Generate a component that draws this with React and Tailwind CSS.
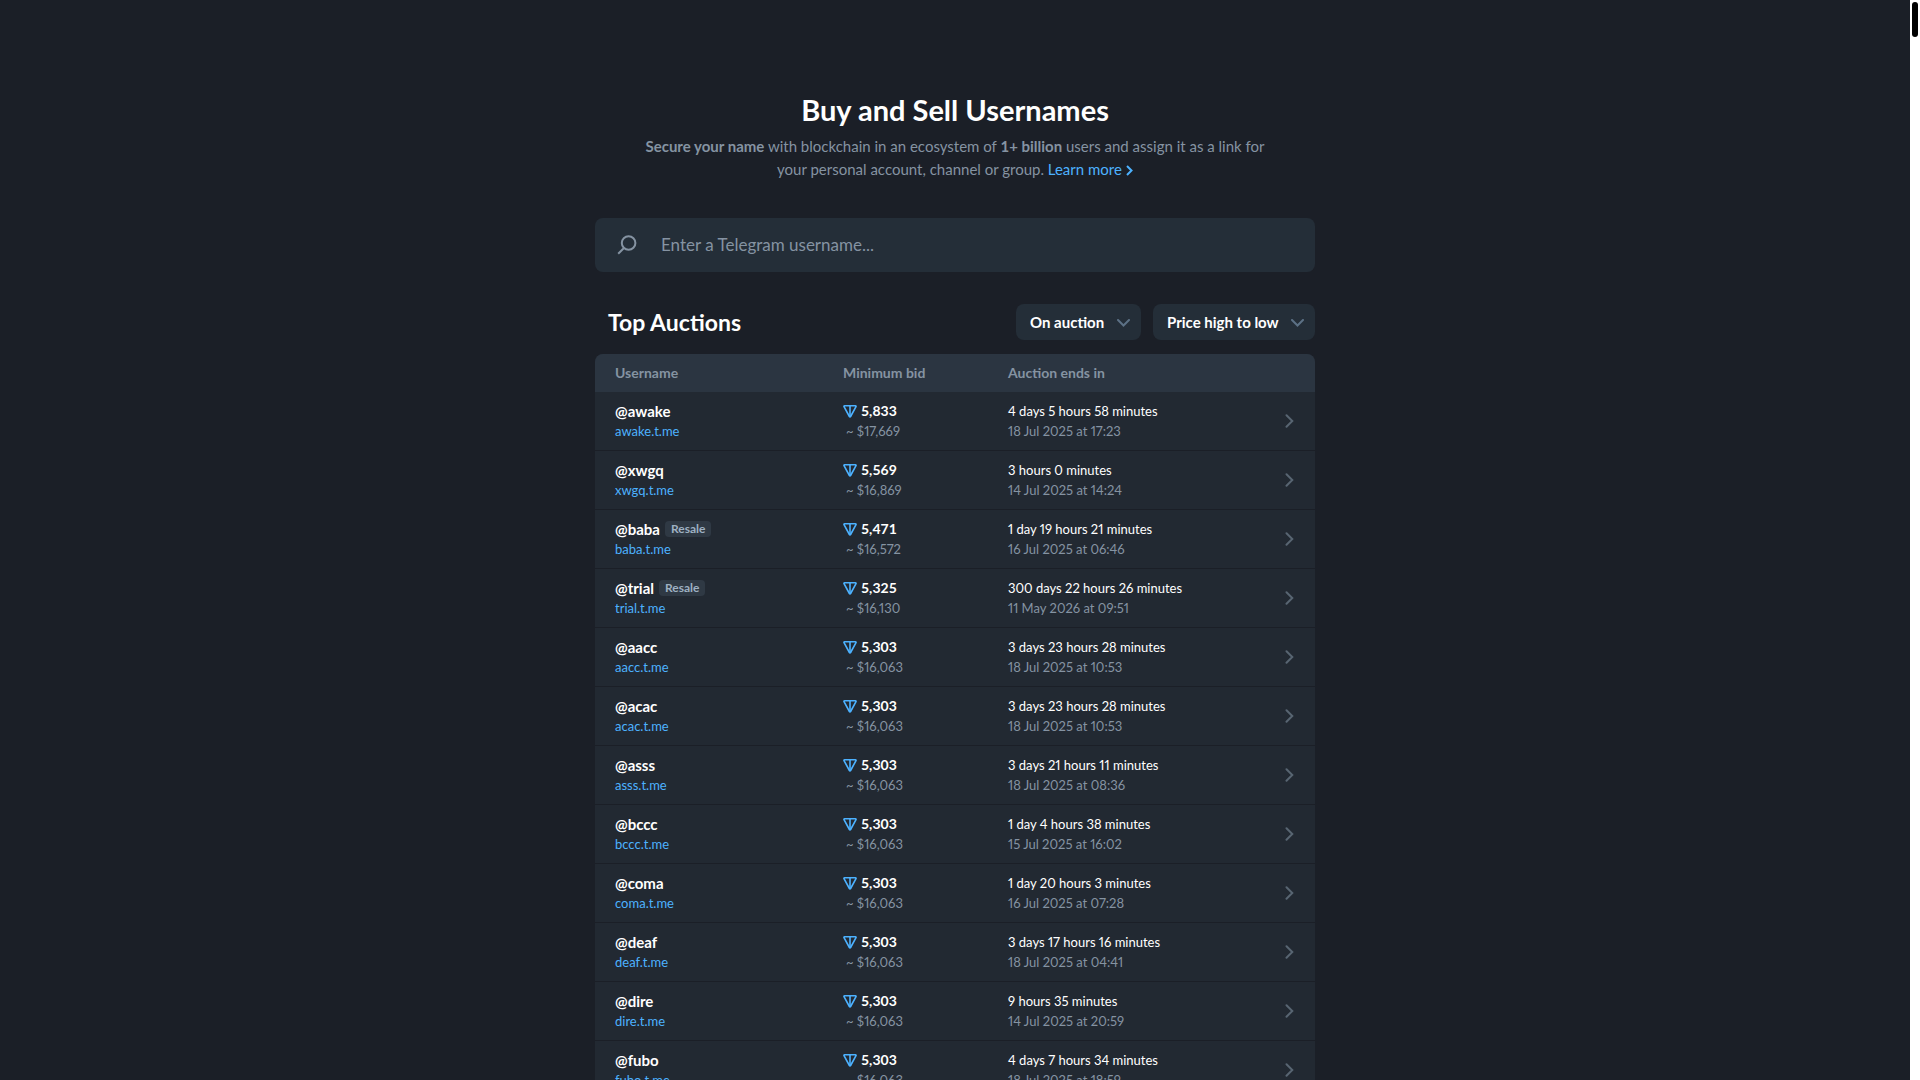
const auctions = [
  { name: "awake", bid: "5,833", usd: "17,669", left: "4 days 5 hours 58 minutes", date: "18 Jul 2025 at 17:23" },
  { name: "xwgq", bid: "5,569", usd: "16,869", left: "3 hours 0 minutes", date: "14 Jul 2025 at 14:24" },
  { name: "baba", resale: true, bid: "5,471", usd: "16,572", left: "1 day 19 hours 21 minutes", date: "16 Jul 2025 at 06:46" },
  { name: "trial", resale: true, bid: "5,325", usd: "16,130", left: "300 days 22 hours 26 minutes", date: "11 May 2026 at 09:51" },
  { name: "aacc", bid: "5,303", usd: "16,063", left: "3 days 23 hours 28 minutes", date: "18 Jul 2025 at 10:53" },
  { name: "acac", bid: "5,303", usd: "16,063", left: "3 days 23 hours 28 minutes", date: "18 Jul 2025 at 10:53" },
  { name: "asss", bid: "5,303", usd: "16,063", left: "3 days 21 hours 11 minutes", date: "18 Jul 2025 at 08:36" },
  { name: "bccc", bid: "5,303", usd: "16,063", left: "1 day 4 hours 38 minutes", date: "15 Jul 2025 at 16:02" },
  { name: "coma", bid: "5,303", usd: "16,063", left: "1 day 20 hours 3 minutes", date: "16 Jul 2025 at 07:28" },
  { name: "deaf", bid: "5,303", usd: "16,063", left: "3 days 17 hours 16 minutes", date: "18 Jul 2025 at 04:41" },
  { name: "dire", bid: "5,303", usd: "16,063", left: "9 hours 35 minutes", date: "14 Jul 2025 at 20:59" },
  { name: "fubo", bid: "5,303", usd: "16,063", left: "4 days 7 hours 34 minutes", date: "18 Jul 2025 at 18:59" },
];

export default function App() {
  return (
    <div className="flex h-screen bg-[#1b1f27] font-['Lato','Liberation_Sans',sans-serif] text-white">
      <main className="min-w-0 flex-1 overflow-hidden">
        <div className="mx-auto max-w-[720px] pt-[92px]">
          <Intro />
          <SearchBox />

          <section className="mt-8">
            <div className="flex items-center justify-between pl-[13px]">
              <h2 className="text-[23px] leading-9 font-bold">Top Auctions</h2>
              <div className="flex gap-3">
                <Dropdown label="Status" value="On auction" />
                <Dropdown label="Sort by" value="Price high to low" />
              </div>
            </div>
            <AuctionTable />
          </section>
        </div>
      </main>

      <ScrollTrack />
    </div>
  );
}

function Intro() {
  return (
    <header className="text-center">
      <h1 className="text-[29px] leading-9 font-bold">Buy and Sell Usernames</h1>
      <p className="mx-auto mt-[7px] max-w-[640px] text-[15px] leading-[23px] text-[#8593a2]">
        <b className="font-bold">Secure your name</b> with blockchain in an ecosystem of{" "}
        <b className="font-bold">1+ billion</b> users and assign it as a link for
        <br />
        your personal account, channel or group.{" "}
        <a href="#about" className="text-[#4db2ff]">
          Learn more
          <svg
            className="ml-1 inline-block h-[11px] w-[7px] align-[-1px]"
            viewBox="0 0 7 11"
            fill="none"
            stroke="currentColor"
            strokeWidth="2"
          >
            <path d="M1 1l4.5 4.5L1 10" />
          </svg>
        </a>
      </p>
    </header>
  );
}

function SearchBox() {
  return (
    <form className="mt-[37px] flex h-[54px] items-center rounded-lg bg-[#242e38] pl-[22px]">
      <svg
        className="h-5 w-5 shrink-0 text-[#8593a2]"
        viewBox="0 0 20 20"
        fill="none"
        stroke="currentColor"
        strokeWidth="2"
      >
        <circle cx="11.6" cy="8" r="6.8" />
        <path d="M7 13L1.2 18.8" />
      </svg>
      <input
        type="text"
        aria-label="Enter a Telegram username..."
        placeholder="Enter a Telegram username..."
        className="ml-6 min-w-0 flex-1 bg-transparent text-[17px] leading-6 outline-none placeholder:text-[#8593a2]"
      />
    </form>
  );
}

function Dropdown({ label, value }) {
  return (
    <div className="relative">
      <select
        aria-label={label}
        defaultValue={value}
        className="h-9 cursor-pointer appearance-none rounded-lg bg-[#242e38] pr-9 pl-[14px] text-[15px] leading-5 font-bold outline-none"
      >
        <option>{value}</option>
      </select>
      <svg
        className="pointer-events-none absolute top-[15px] right-[11px] h-2 w-[13px] text-[#5c7185]"
        viewBox="0 0 13 8"
        fill="none"
        stroke="currentColor"
        strokeWidth="2"
        strokeLinecap="round"
      >
        <path d="M1 1l5.5 5.5L12 1" />
      </svg>
    </div>
  );
}

function AuctionTable() {
  return (
    <table className="mt-[14px] w-full table-fixed overflow-hidden rounded-lg bg-[#222932] text-left">
      <thead className="bg-[#2b3541] text-sm leading-[18px] text-[#8593a2]">
        <tr>
          <th className="w-[248px] py-[10px] pl-5 font-bold">Username</th>
          <th className="w-[165px] py-[10px] font-bold">Minimum bid</th>
          <th className="py-[10px] font-bold">Auction ends in</th>
          <th className="w-[30px]" />
        </tr>
      </thead>
      <tbody>
        {auctions.map((auction) => (
          <AuctionRow key={auction.name} auction={auction} />
        ))}
      </tbody>
    </table>
  );
}

function AuctionRow({ auction }) {
  return (
    <tr className="border-b border-[#1b1f27] text-[13px] leading-5 proportional-nums">
      <td className="py-[9px] pl-5">
        <div className="flex items-center gap-[5px] text-[15px] leading-5 font-bold">
          @{auction.name}
          {auction.resale && (
            <span className="h-4 rounded bg-[#2f3944] px-[6px] text-xs leading-4 text-[#9eb0c2]">
              Resale
            </span>
          )}
        </div>
        <a href={`#${auction.name}`} className="block text-[#4db2ff]">
          {auction.name}.t.me
        </a>
      </td>
      <td className="py-[9px]">
        <div className="flex items-center gap-1 text-sm leading-5 font-bold tabular-nums">
          <TonIcon />
          {auction.bid}
        </div>
        <div className="pl-[3px] text-[#8593a2]">~ ${auction.usd}</div>
      </td>
      <td className="py-[9px]">
        <div>{auction.left}</div>
        <div className="text-[#8593a2]">{auction.date}</div>
      </td>
      <td>
        <svg
          className="h-[14px] w-[9px] text-[#586572]"
          viewBox="0 0 9 14"
          fill="none"
          stroke="currentColor"
          strokeWidth="2"
          strokeLinecap="round"
        >
          <path d="M1.5 1.2L7.3 7l-5.8 5.8" />
        </svg>
      </td>
    </tr>
  );
}

function TonIcon() {
  return (
    <svg
      className="h-[14px] w-[14px]"
      viewBox="0 0 14 14"
      fill="none"
      stroke="#4db2ff"
      strokeWidth="1.6"
      strokeLinejoin="round"
    >
      <path d="M1.5 1.7h11c.5 0 .7.5.5.9L7.6 12.5c-.3.5-.9.5-1.2 0L1 2.6c-.2-.4 0-.9.5-.9z" />
      <path d="M7 1.7v10.8" />
    </svg>
  );
}

function ScrollTrack() {
  return (
    <div className="w-[10px] bg-white p-[2px]">
      <div className="h-[35px] rounded-full bg-black" />
    </div>
  );
}
